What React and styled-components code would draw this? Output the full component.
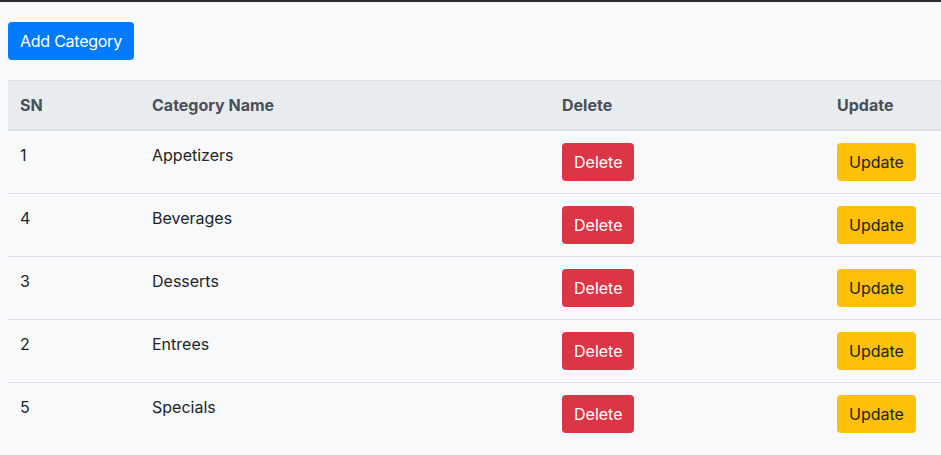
import React from 'react';
import styled, { createGlobalStyle } from 'styled-components';

const GlobalStyle = createGlobalStyle`
  html, body {
    margin: 0;
    padding: 0;
    background: #f8f9fa;
    font-family: Inter, "Liberation Sans", sans-serif;
    color: #212529;
    overflow: hidden;
  }
`;

const categories = [
  { sn: 1, name: 'Appetizers' },
  { sn: 4, name: 'Beverages' },
  { sn: 3, name: 'Desserts' },
  { sn: 2, name: 'Entrees' },
  { sn: 5, name: 'Specials' },
];

const App = () => {
  return (
    <>
      <GlobalStyle />
      <TopBar />
      <Page>
        <Button variant="primary">Add Category</Button>
        <Table>
          <colgroup>
            <col width="132" />
            <col width="410" />
            <col width="275" />
            <col width="116" />
          </colgroup>
          <thead>
            <tr>
              <th>SN</th>
              <th>Category Name</th>
              <th>Delete</th>
              <th>Update</th>
            </tr>
          </thead>
          <tbody>
            {categories.map((c) => (
              <tr key={c.sn}>
                <td>{c.sn}</td>
                <td>{c.name}</td>
                <td><Button variant="danger">Delete</Button></td>
                <td><Button variant="warning">Update</Button></td>
              </tr>
            ))}
          </tbody>
        </Table>
      </Page>
    </>
  );
};

export default App;

const colors = {
  primary: { bg: '#007bff', fg: '#fff', ls: '-0.25px' },
  danger: { bg: '#dc3545', fg: '#fff', ls: '0' },
  warning: { bg: '#ffc107', fg: '#212529', ls: '0' },
};

const TopBar = styled.div`
  height: 2px;
  background: #2b2d30;
`;

const Page = styled.div`
  padding: 20px 0 0 8px;
`;

const Button = styled.button`
  display: inline-block;
  font-family: inherit;
  font-size: 16px;
  line-height: 24px;
  letter-spacing: ${(p) => colors[p.variant].ls};
  padding: 7px 12px;
  border: none;
  border-radius: 4px;
  background: ${(p) => colors[p.variant].bg};
  color: ${(p) => colors[p.variant].fg};
  cursor: pointer;
`;

const Table = styled.table`
  margin-top: 20px;
  width: 933px;
  border-collapse: collapse;
  table-layout: fixed;
  font-size: 16px;

  th, td {
    box-sizing: border-box;
    padding: 12px;
    text-align: left;
    vertical-align: top;
    line-height: 24px;
    border-top: 1px solid #dee2e6;
  }

  thead th {
    background: #e9ecef;
    color: #495057;
    font-weight: 700;
    border-bottom: 2px solid #dee2e6;
  }
`;
